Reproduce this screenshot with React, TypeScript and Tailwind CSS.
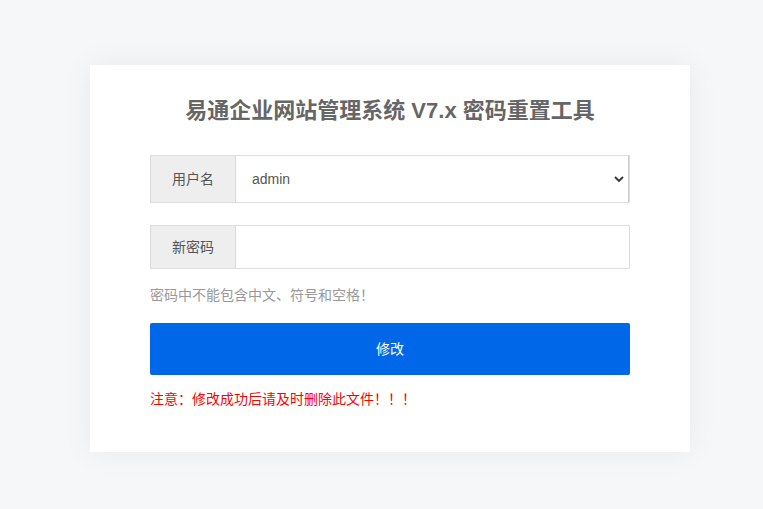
import { useState } from 'react';

export default function App() {
  const [user, setUser] = useState('admin');
  const [pwd, setPwd] = useState('');

  return (
    <div
      className="min-h-screen bg-[#f6f7f9] pt-[65px]"
      style={{ fontFamily: '"Liberation Sans", "Noto Sans CJK SC", sans-serif' }}
    >
      <div className="ml-[90px] w-[600px] bg-white px-[60px] pt-[31px] pb-[43px] shadow-[0_0_30px_rgba(0,0,0,0.06)]">
        <h1 className="text-center text-[22px] leading-[30px] font-bold text-[#666]">
          易通企业网站管理系统 V7.x 密码重置工具
        </h1>

        <div className="mt-[29px] flex h-[48px] border border-[#ddd]">
          <div className="flex w-[85px] shrink-0 items-center justify-center border-r border-[#ddd] bg-[#eee] text-[14px] text-[#555]">
            用户名
          </div>
          <div className="relative flex-1 border-r border-[#ccc]">
            <select
              value={user}
              onChange={(e) => setUser(e.target.value)}
              className="h-full w-full appearance-none bg-white pl-[16px] text-[14px] text-[#555] outline-none"
            >
              <option value="admin">admin</option>
            </select>
            <svg
              className="pointer-events-none absolute right-[4px] top-1/2 -translate-y-1/2"
              width="10"
              height="7"
              viewBox="0 0 10 7"
            >
              <path d="M1 1.5 L5 5.5 L9 1.5" fill="none" stroke="#333" strokeWidth="1.8" />
            </svg>
          </div>
        </div>

        <div className="mt-[22px] flex h-[44px] border border-[#ddd]">
          <div className="flex w-[85px] shrink-0 items-center justify-center border-r border-[#ddd] bg-[#eee] text-[14px] text-[#555]">
            新密码
          </div>
          <input
            type="password"
            value={pwd}
            onChange={(e) => setPwd(e.target.value)}
            className="min-w-0 flex-1 bg-white px-[16px] text-[14px] text-[#555] outline-none"
          />
        </div>

        <p className="mt-[16px] text-[14px] leading-[20px] text-[#999]">密码中不能包含中文、符号和空格！</p>

        <button className="mt-[18px] h-[52px] w-full rounded-[2px] bg-[#0068e8] text-[14px] text-white">
          修改
        </button>

        <p className="mt-[14px] text-[14px] leading-[20px] text-[#f00]">注意：修改成功后请及时删除此文件！！！</p>
      </div>
    </div>
  );
}
